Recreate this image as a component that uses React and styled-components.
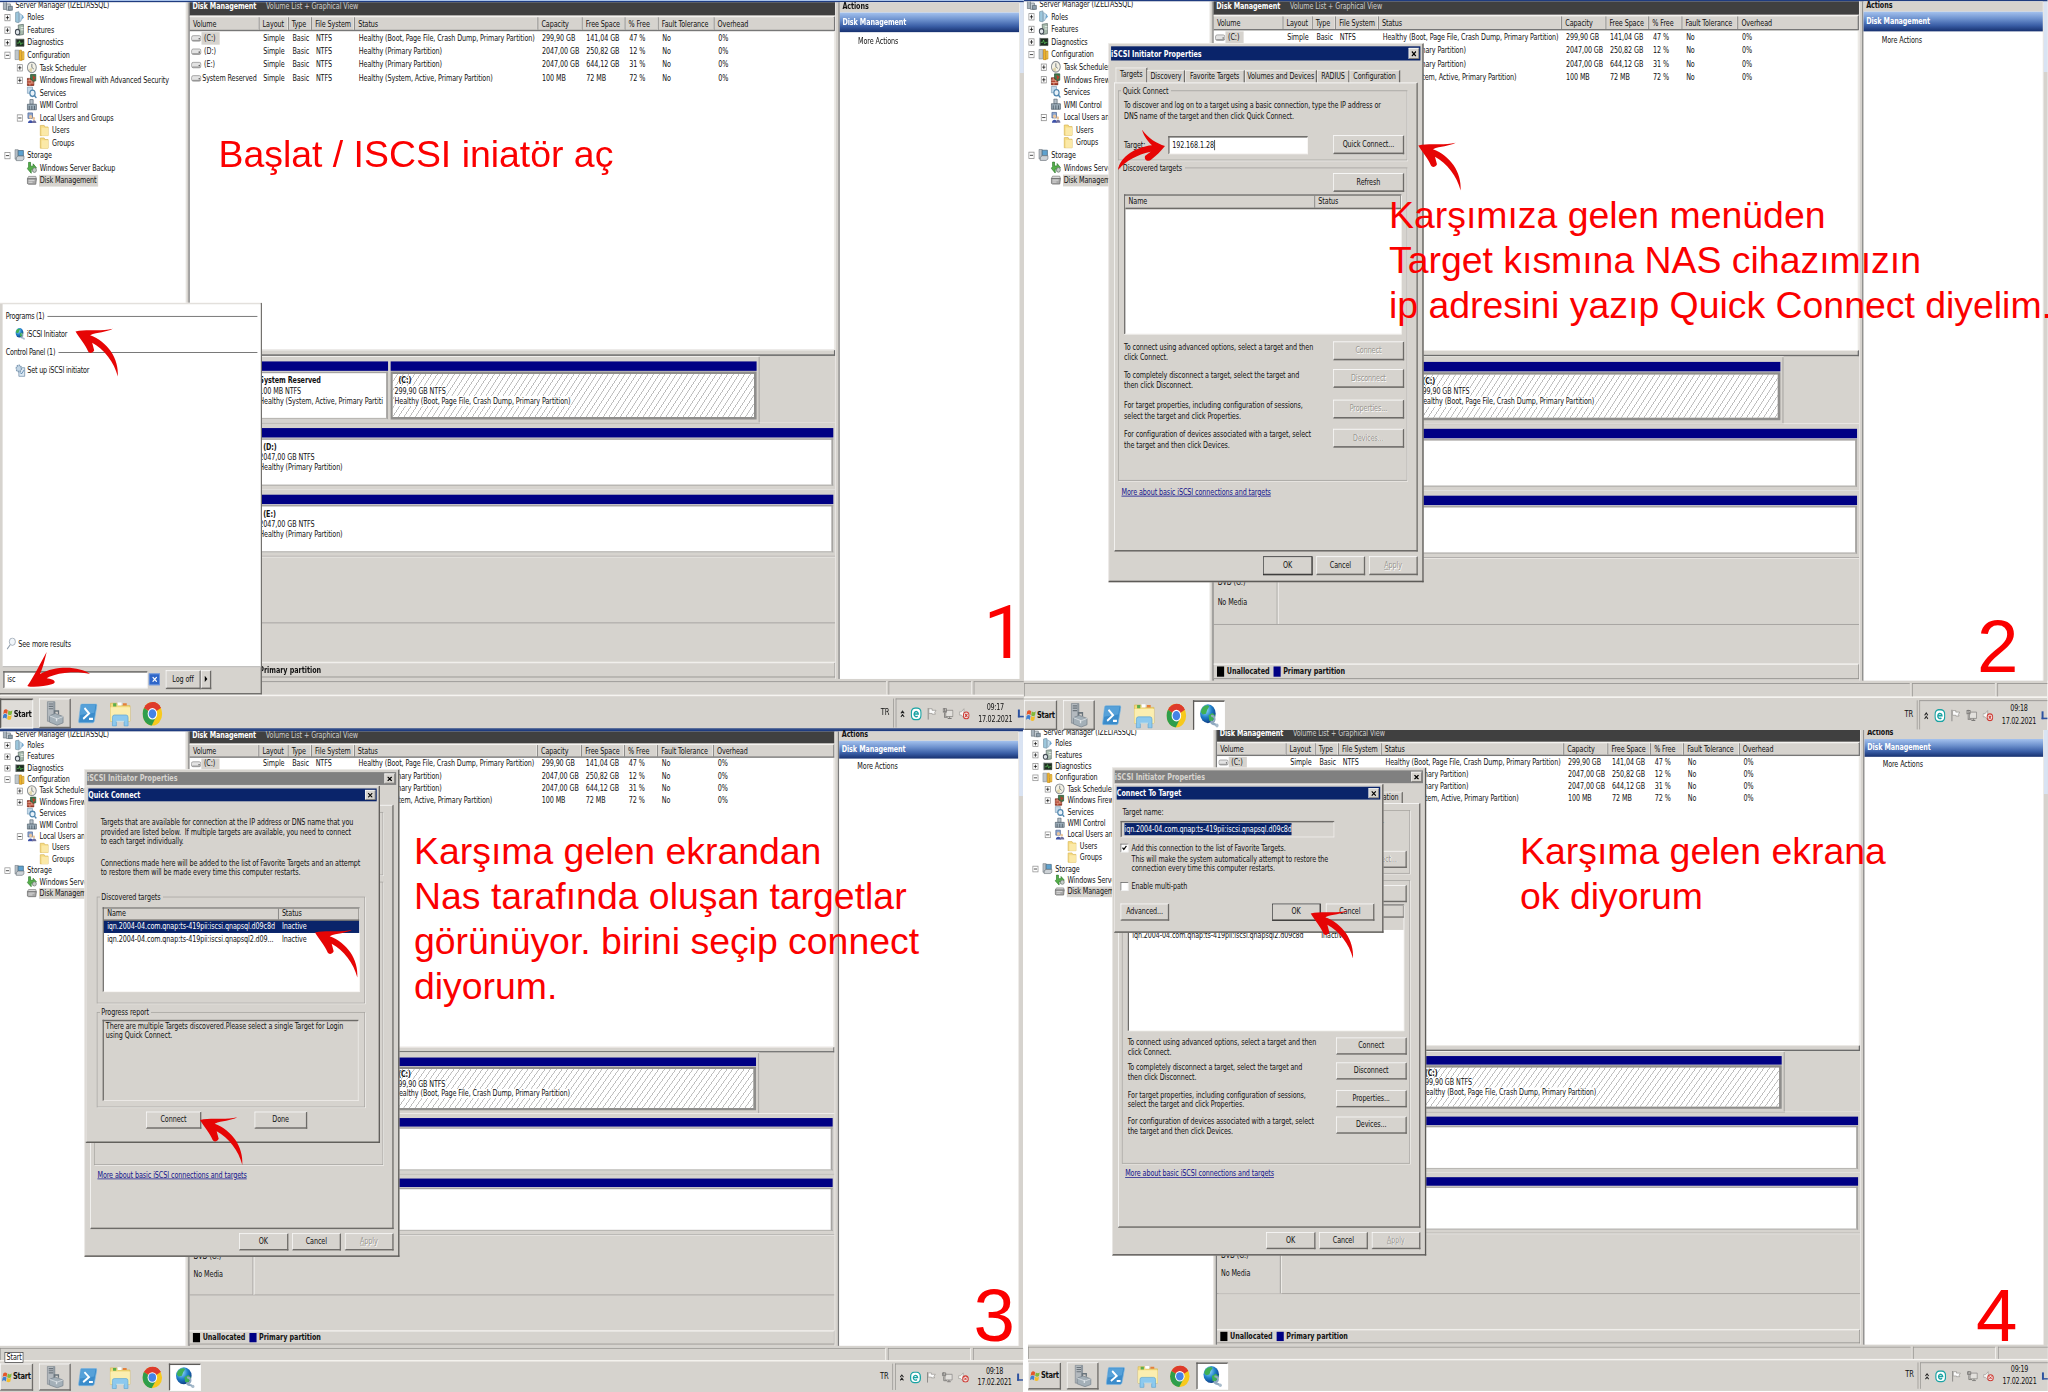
import React from "react";
import styled, { createGlobalStyle, css } from "styled-components";

const FACE = "#d6d3ce";
const NAVY = "#0a246a";
const DISK_BLUE = "#000084";

const GlobalStyle = createGlobalStyle`
  html, body { margin: 0; padding: 0; background: #fff; }
  body { width: 2048px; height: 1392px; overflow: hidden; }
  * { box-sizing: border-box; }
`;

/* ---------- page ---------- */

const Sheet = styled.main`
  position: relative;
  display: grid;
  grid-template-columns: 1024px 1024px;
  grid-template-rows: 730px 662px;
  width: 2048px;
  height: 1392px;
  overflow: hidden;
  background: #fff;
`;

const Shot = styled.section`
  overflow: hidden;
  background: #fff;
  padding-left: ${(p) => p.$inset || 0}px;
`;

const Desktop = styled.div`
  position: relative;
  display: flex;
  flex-direction: column;
  width: 1575px;
  height: 931px;
  background: ${FACE};
  transform-origin: 0 0;
  transform: translateY(${(p) => p.$dy || 0}px) scale(${(p) => p.$sx}, ${(p) => p.$sy});
  font-family: "DejaVu Sans Condensed", "DejaVu Sans", "Noto Sans", sans-serif;
  font-size: 11px;
  letter-spacing: -0.14px;
  line-height: 13px;
  color: #111;
  white-space: nowrap;
`;

const TopStrip = styled.div`
  flex: none;
  height: 3px;
  background: linear-gradient(#a9c3ea 0 30%, #1f3c80 50%);
`;

const Body = styled.div`
  flex: none;
  display: flex;
  height: 863px;
`;

/* ---------- tree ---------- */

const TreePane = styled.nav`
  width: 286px;
  overflow: hidden;
  background: #fff;
`;

const TreeList = styled.div`
  margin-top: -5px;
`;

const TreeRow = styled.div`
  display: flex;
  align-items: center;
  height: 16px;
  padding-left: ${(p) => p.$pad}px;
`;

const Expander = styled.span`
  flex: none;
  display: grid;
  place-items: center;
  width: 9px;
  height: 9px;
  margin-right: 6px;
  border: 1px solid ${(p) => (p.$on ? "#8a8a8a" : "transparent")};
  svg { display: block; }
`;

const TreeIcon = styled.svg`
  flex: none;
  width: 16px;
  height: 16px;
`;

const TreeText = styled.span`
  margin-left: 3px;
  padding: 1px 2px 1px 1px;
  background: ${(p) => (p.$sel ? FACE : "transparent")};
`;

const PaneGap = styled.div`
  width: ${(p) => p.$w}px;
  background: ${FACE};
  border-left: 1px solid #f1efec;
  border-right: 2px solid #7c7c7c;
`;

/* ---------- centre ---------- */

const Centre = styled.div`
  display: flex;
  flex-direction: column;
  width: 993px;
`;

const DarkTitle = styled.div`
  flex: none;
  display: flex;
  align-items: flex-start;
  gap: 15px;
  height: 17px;
  padding: 0 0 0 4px;
  line-height: 12px;
  background: #404040;
  color: #cfcfcf;
  b { color: #fff; }
`;

const TableHead = styled.div`
  flex: none;
  display: flex;
  height: 20px;
  border-top: 2px solid #f4f2ef;
  border-bottom: 2px solid #777;
  border-right: 2px solid #777;
  background: ${FACE};
`;

const HeadCell = styled.div`
  flex: none;
  width: ${(p) => p.$w}px;
  padding: 2px 0 0 5px;
  border-right: ${(p) => (p.$last ? 0 : 1)}px solid #666;
  box-shadow: ${(p) => (p.$last ? "none" : "inset -1px 0 0 #f6f4f1")};
`;

const VolumeArea = styled.div`
  flex: none;
  height: 406px;
  background: #fff;
  border-right: 2px solid #eceae6;
`;

const VolRow = styled.div`
  display: flex;
  align-items: center;
  height: 17px;
`;

const VolCell = styled.div`
  flex: none;
  display: flex;
  align-items: center;
  width: ${(p) => p.$w}px;
  padding-left: ${(p) => (p.$first ? 2 : 6)}px;
`;

const VolName = styled.span`
  padding: 1px 7px 2px 4px;
  margin-right: -8px;
  ${(p) => p.$tight && css`padding-left: 1px;`}
  background: ${(p) => (p.$sel ? FACE : "transparent")};
`;

const Splitter = styled.div`
  flex: none;
  height: 8px;
  background: ${FACE};
  border-top: 1px solid #f4f2ef;
  border-bottom: 2px solid #6b6b6b;
  border-right: 2px solid #6b6b6b;
`;

const Graph = styled.div`
  flex: none;
  height: 390px;
  padding-top: 1px;
  background: ${FACE};
`;

const DiskRow = styled.div`
  display: flex;
  height: 85px;
  padding: 6px 0 4px 101px;
  width: ${(p) => p.$w}px;
  gap: 4px;
  border-bottom: 1px solid #9b9996;
  box-shadow: 0 -1px 0 #f1efec;
  ${(p) => p.$edge && css`border-right: 2px solid #b0aeaa;`}
`;

const Partition = styled.div`
  display: flex;
  flex-direction: column;
  width: ${(p) => p.$w}px;
`;

const PartBar = styled.div`
  flex: none;
  height: 12px;
  background: ${DISK_BLUE};
`;

const PartBox = styled.div`
  height: 62px;
  margin-top: 1px;
  padding: 3px 4px;
  border: 2px solid #a6a4a1;
  border-right-width: 3px;
  border-bottom-color: #b9b7b3;
  background: #fff;
  overflow: hidden;
  ${(p) =>
    p.$hatch &&
    css`
      border-width: 3px 4px 3px 3px;
      border-color: #8f8e8c;
      padding: 2px 3px;
      background: repeating-linear-gradient(128deg, #fff 0 5.4px, #bdbdbd 5.7px 6.6px, #fff 6.9px);
    `}
  b { display: block; padding-left: ${(p) => p.$ind}px; }
  div { width: fit-content; background: #fff; }
`;

const OpticalRow = styled.div`
  display: flex;
  height: 85px;
  border-top: 1px solid #f1efec;
  border-bottom: 1px solid #9b9996;
`;

const OpticalLabel = styled.div`
  width: 98px;
  padding: 23px 0 0 6px;
  border-right: 1px solid #8d8b88;
  box-shadow: 2px 0 0 #f1efec;
  div { height: 13px; }
`;

const Legend = styled.div`
  flex: none;
  display: flex;
  align-items: center;
  gap: 4px;
  height: 20px;
  padding-left: 5px;
  border-top: 2px solid #f1efec;
  border-bottom: 1px solid #8d8b88;
  border-right: 1px solid #8d8b88;
  background: ${FACE};
  b { margin-right: 2px; letter-spacing: -0.05px; }
`;

const Swatch = styled.span`
  width: 11px;
  height: 13px;
  background: ${(p) => p.$c};
`;

/* ---------- right ---------- */

const Actions = styled.aside`
  width: 276px;
  background: #fff;
`;

const ActionsHead = styled.div`
  height: 13px;
  padding-left: 4px;
  line-height: 10px;
  font-weight: bold;
  background: ${FACE};
`;

const ActionsTitle = styled.div`
  height: 25px;
  padding-left: 4px;
  line-height: 25px;
  font-weight: bold;
  color: #fff;
  background: linear-gradient(#a4c2ee, #6f93cf 35%, #3a5ea6 70%, #16306f);
`;

const ActionItem = styled.div`
  padding: 5px 0 0 28px;
`;

const Scroll = styled.div`
  width: 7px;
  background: linear-gradient(#d9e3f3 0 90px, ${FACE} 90px);
  border-left: 1px solid #f3f1ee;
`;

/* ---------- status bar and taskbar ---------- */

const StatusBar = styled.div`
  flex: none;
  display: flex;
  gap: 4px;
  height: 22px;
  padding-top: 3px;
  border-bottom: 2px solid #f6f4f1;
`;

const StatusCell = styled.div`
  width: ${(p) => p.$w}px;
  border-top: 1px solid #908e8b;
  border-left: 1px solid #908e8b;
  box-shadow: 1px 0 0 #f1efec;
`;

const Taskbar = styled.div`
  flex: none;
  display: flex;
  align-items: flex-start;
  height: 43px;
  padding-top: 3px;
  border-bottom: ${(p) => (p.$line ? "2px solid #1f3c80" : "0")};
`;

const raised = css`
  border: 1px solid #fff;
  border-right: 2px solid #6d6b68;
  border-bottom: 2px solid #6d6b68;
`;

const StartButton = styled.div`
  display: flex;
  align-items: center;
  width: 51px;
  height: 38px;
  padding-left: 2px;
  gap: 1px;
  font-weight: bold;
  font-size: 11.5px;
  letter-spacing: -0.4px;
  ${raised}
  ${(p) =>
    p.$down &&
    css`
      border: 2px solid #5d5b58;
      border-right: 1px solid #fff;
      border-bottom: 1px solid #fff;
      background: #dfdcd8;
    `}
`;

const TaskItem = styled.div`
  display: grid;
  place-items: center;
  width: 49px;
  height: 38px;
  margin-left: ${(p) => p.$ml}px;
  border: 1px solid transparent;
  ${(p) => p.$kind === "window" && raised}
  ${(p) =>
    p.$kind === "active" &&
    css`
      background: #fff;
      border: 2px solid #5d5b58;
      border-right: 1px solid #fff;
      border-bottom: 1px solid #fff;
    `}
`;

const Lang = styled.div`
  margin-left: auto;
  width: 20px;
  height: 37px;
  line-height: 34px;
  font-size: 11.5px;
  border-right: 1px solid #8f8d8a;
`;

const Tray = styled.div`
  display: flex;
  align-items: center;
  width: 197px;
  height: 37px;
  margin-left: 3px;
  padding-left: 5px;
  gap: 8px;
  border-top: 1px solid #8f8d8a;
  border-left: 1px solid #8f8d8a;
  svg { flex: none; display: block; }
`;

const Clock = styled.div`
  display: flex;
  flex-direction: column;
  align-items: center;
  width: 66px;
  line-height: 16px;
  letter-spacing: -0.4px;
`;

const Peek = styled.span`
  align-self: center;
  width: 9px;
  height: 10px;
  margin-left: -4px;
  border-left: 3px solid #2d52a0;
  border-bottom: 2px solid #2d52a0;
`;

const Tooltip = styled.div`
  position: absolute;
  left: 7px;
  top: 875px;
  width: 19px;
  min-width: max-content;
  height: 15px;
  padding: 0 2px;
  border: 1px solid #333;
  background: #fff;
  text-align: center;
  line-height: 13px;
`;

/* ---------- start menu ---------- */

const StartMenu = styled.div`
  position: absolute;
  left: 0;
  top: 386px;
  display: flex;
  flex-direction: column;
  width: 403px;
  height: 500px;
  background: ${FACE};
  border-top: 1px solid #f4f2ef;
  border-right: 2px solid #6d6b68;
  border-bottom: 2px solid #6d6b68;
`;

const MenuResults = styled.div`
  display: flex;
  flex-direction: column;
  height: 463px;
  margin: 1px 0 0 4px;
  padding: 8px 5px 0 5px;
  background: #fff;
  border-bottom: 1px solid #9b9996;
`;

const MenuHeading = styled.div`
  display: flex;
  align-items: center;
  gap: 5px;
  height: 14px;
  letter-spacing: -0.4px;
  margin-bottom: ${(p) => p.$gap}px;
  &::after { content: ""; flex: 1; height: 1px; background: #555; }
`;

const MenuEntry = styled.div`
  display: flex;
  align-items: center;
  gap: 2px;
  height: 16px;
  padding-left: 14px;
  letter-spacing: -0.3px;
  margin-bottom: ${(p) => p.$gap}px;
`;

const MoreResults = styled.div`
  display: flex;
  align-items: center;
  gap: 3px;
  margin: auto 0 21px 1px;
`;

const SearchRow = styled.div`
  display: flex;
  align-items: center;
  height: 31px;
  padding-left: 5px;
`;

const sunken = css`
  border: 2px solid #6d6b68;
  border-right: 1px solid #f4f2ef;
  border-bottom: 1px solid #f4f2ef;
`;

const SearchBox = styled.div`
  width: 222px;
  height: 22px;
  padding: 2px 0 0 4px;
  background: #fff;
  ${sunken}
`;

const ClearButton = styled.div`
  display: grid;
  place-items: center;
  width: 17px;
  height: 15px;
  margin: 0 9px 0 2px;
  background: #2f66c8;
  border: 1px solid #86aae6;
`;

const LogOff = styled.div`
  display: grid;
  place-items: center;
  width: ${(p) => p.$w}px;
  height: 24px;
  ${raised}
`;

/* ---------- dialogs ---------- */

const Window = styled.div`
  position: absolute;
  left: ${(p) => p.$x}px;
  top: ${(p) => p.$y}px;
  display: flex;
  flex-direction: column;
  width: ${(p) => p.$w}px;
  height: ${(p) => p.$h}px;
  padding: 3px;
  background: ${FACE};
  border: 1px solid #efedea;
  border-right: 2px solid #5d5b58;
  border-bottom: 2px solid #5d5b58;
`;

const Caption = styled.div`
  flex: none;
  display: flex;
  justify-content: space-between;
  align-items: center;
  height: 18px;
  padding: 0 2px 0 0;
  font-weight: bold;
  letter-spacing: 0;
  color: ${(p) => (p.$off ? "#d8d5d0" : "#fff")};
  background: ${(p) => (p.$off ? "#808080" : NAVY)};
`;

const CloseBox = styled.span`
  display: grid;
  place-items: center;
  width: 16px;
  height: 14px;
  background: ${FACE};
  ${raised}
  border-width: 1px;
`;

const Tabs = styled.div`
  flex: none;
  display: flex;
  align-items: flex-end;
  height: 19px;
  margin: 9px 0 0 7px;
`;

const Tab = styled.div`
  display: grid;
  place-items: center;
  width: ${(p) => p.$w}px;
  height: ${(p) => (p.$on ? 19 : 16)}px;
  padding-bottom: ${(p) => (p.$on ? 3 : 0)}px;
  border-top: 1px solid #f6f4f1;
  border-left: 1px solid #f6f4f1;
  border-right: 2px solid #6d6b68;
`;

const Page = styled.div`
  flex: none;
  display: flex;
  flex-direction: column;
  height: 596px;
  margin: 0 4px 0 5px;
  padding: 3px 14px 0 5px;
  ${raised}
`;

const Group = styled.fieldset`
  flex: none;
  display: flex;
  flex-direction: column;
  height: ${(p) => p.$h}px;
  min-width: 0;
  margin: 0 0 ${(p) => p.$mb || 0}px;
  padding: 0 4px 0 8px;
  border: 1px solid #a3a19d;
  box-shadow: 1px 1px 0 #f4f2ef;
  legend { padding: 0 4px 0 2px; margin-left: -4px; height: 13px; }
`;

const Copy = styled.div`
  flex: none;
  height: ${(p) => p.$h}px;
  padding-top: ${(p) => p.$pt || 0}px;
  line-height: 13px;
`;

const Line = styled.div`
  flex: none;
  display: flex;
  align-items: ${(p) => p.$align || "center"};
  justify-content: ${(p) => p.$justify || "flex-start"};
  gap: ${(p) => p.$gap || 0}px;
  height: ${(p) => p.$h}px;
`;

const Button = styled.div`
  flex: none;
  display: grid;
  place-items: center;
  width: ${(p) => p.$w}px;
  height: 24px;
  color: ${(p) => (p.$off ? "#98958f" : "#111")};
  text-shadow: ${(p) => (p.$off ? "1px 1px 0 #fff" : "none")};
  background: ${FACE};
  ${raised}
  outline: ${(p) => (p.$default ? "1px solid #222" : "none")};
  outline-offset: -1px;
`;

const FieldLabel = styled.span`
  flex: none;
  width: 68px;
`;

const TextField = styled.div`
  flex: none;
  width: ${(p) => p.$w}px;
  height: 23px;
  padding: 3px 0 0 4px;
  background: ${(p) => (p.$ro ? FACE : "#fff")};
  ${sunken}
  mark { padding: 2px 0; color: #fff; background: ${NAVY}; }
  span { padding-right: 1px; border-right: 1px solid #000; }
`;

const ListBox = styled.div`
  flex: none;
  height: ${(p) => p.$h}px;
  margin-right: ${(p) => p.$mr || 0}px;
  background: #fff;
  ${sunken}
`;

const ListHead = styled.div`
  display: flex;
  height: 17px;
  background: ${FACE};
  border-bottom: 2px solid #6d6b68;
  border-right: 1px solid #6d6b68;
`;

const ListCell = styled.div`
  flex: none;
  width: ${(p) => p.$w}px;
  padding-left: 5px;
  ${(p) => p.$line && css`border-right: 1px solid #666;`}
`;

const ListRow = styled.div`
  display: flex;
  align-items: center;
  height: 17px;
  color: ${(p) => (p.$sel ? "#fff" : "#111")};
  background: ${(p) => (p.$sel ? NAVY : p.$dim ? FACE : "transparent")};
`;

const Link = styled.a`
  display: block;
  margin: 8px 0 0 5px;
  color: #12128c;
  text-decoration: underline;
`;

const Report = styled.div`
  flex: none;
  height: 114px;
  margin: 4px 5px 0 0;
  padding: 1px 0 0 3px;
  ${sunken}
`;

const CheckBox = styled.span`
  display: grid;
  place-items: center;
  width: 12px;
  height: 12px;
  background: #fff;
  border: 1px solid #555;
  border-right-color: #eee;
  border-bottom-color: #eee;
`;

const PushRight = styled.span`
  margin-left: auto;
`;

const ActionSpacer = styled.div`
  flex: none;
  height: 9px;
`;

const DialogFooter = styled.div`
  flex: none;
  display: flex;
  justify-content: flex-end;
  gap: 6px;
  padding: 6px 4px 0 0;
  u { text-decoration: underline; }
  ${Button} { display: flex; align-items: center; justify-content: center; }
`;

const QuickBody = styled.div`
  padding: 24px 18px 0 19px;
`;

const QuickGroups = styled.div`
  margin: 0 0 0 -6px;
`;

const GroupInner = styled.div`
  padding-top: 8px;
`;

const QuickButtons = styled.div`
  display: flex;
  gap: 82px;
  padding: 6px 0 0 70px;
`;

const ConnectBody = styled.div`
  padding: 12px 9px 0 6px;
`;

const CheckLines = styled.div`
  padding-top: 7px;
`;

const Indented = styled.div`
  height: 39px;
  padding: 1px 0 0 17px;
`;

const ConnectButtons = styled.div`
  display: flex;
  gap: 8px;
  padding-top: 17px;
`;

/* ---------- annotations ---------- */

const Note = styled.p`
  position: absolute;
  left: ${(p) => p.$x}px;
  top: ${(p) => p.$y}px;
  margin: 0;
  font-family: ${(p) => (p.$plain ? "Roboto, " : "")}"Liberation Sans", Arial, sans-serif;
  font-size: ${(p) => p.$size || 37.4}px;
  line-height: 45px;
  white-space: pre;
  color: #fb0000;
`;

const ArrowLayer = styled.svg`
  position: absolute;
  left: 0;
  top: 0;
  width: 2048px;
  height: 1392px;
  pointer-events: none;
`;

/* ---------- small drawings ---------- */

const treeArt = {
  server: (
    <g>
      <path d="M1 3h5v11H1z" fill="#a9b4bd" stroke="#6b7780" />
      <path d="M6 7h6v8H6z" fill="#c8d0d6" stroke="#6b7780" />
      <path d="M9 10h6v5H9z" fill="#8fa0ad" stroke="#56636d" />
    </g>
  ),
  roles: (
    <g>
      <path d="M2 2l5-1v14l-5-1z" fill="#9cc7dd" stroke="#7795a6" />
      <path d="M8 3l5 3-3 7-2 1z" fill="#c3dcec" stroke="#7ea3bd" />
      <path d="M12 5l3 3-3 3z" fill="#6da5cf" />
    </g>
  ),
  features: (
    <g>
      <path d="M6 2l8-1v13l-7 1z" fill="#a8bcae" stroke="#5b6b66" />
      <path d="M10 5h4M10 8h4" stroke="#fff" />
      <circle cx="5" cy="11" r="3.4" fill="#dfe5ea" stroke="#454d55" strokeWidth="1.6" />
    </g>
  ),
  diagnostics: (
    <g>
      <path d="M1 3h3v11H1z" fill="#b9c0c5" />
      <path d="M3 4h12v9H3z" fill="#1d2b20" stroke="#47524a" />
      <path d="M4 9h3l1-3 2 5 1-2h3" stroke="#57c457" fill="none" />
    </g>
  ),
  config: (
    <g>
      <path d="M1 2h6v12H1z" fill="#bfc6ca" stroke="#8b949a" />
      <path d="M8 2h3v6l1 7H8z" fill="#f0b52c" stroke="#c28714" />
      <path d="M12 4h3v10h-3z" fill="#f6cf55" stroke="#c28714" />
    </g>
  ),
  clock: (
    <g>
      <circle cx="8" cy="8" r="6.8" fill="#f4f1e4" stroke="#8a8f94" strokeWidth="1.5" />
      <path d="M8 3.5V8l3 2" stroke="#4a5662" fill="none" />
      <path d="M3 11a6 6 0 0 0 5 3V8z" fill="#d7c98e" opacity=".7" />
    </g>
  ),
  firewall: (
    <g>
      <path d="M1 6h10v9H1z" fill="#b5432e" stroke="#6e2417" />
      <path d="M1 9h10M1 12h10M4 6v3M8 9v3M5 12v3" stroke="#e6b7a4" />
      <path d="M6 1h8v8a6 6 0 0 1-8-3z" fill="#3f7c4c" stroke="#2a4f34" />
      <path d="M9 2l5 3-4 4z" fill="#b8402d" />
    </g>
  ),
  services: (
    <g>
      <path d="M1 1h8v8H1z" fill="#c3d9ea" stroke="#7e9db5" />
      <circle cx="9" cy="9" r="4" fill="#e9f2f9" stroke="#4f86ae" strokeWidth="1.8" />
      <path d="M12 12l3 3" stroke="#4f86ae" strokeWidth="2" />
    </g>
  ),
  wmi: (
    <g>
      <path d="M5 1h5v6H5z" fill="#b8c3cb" stroke="#5d6b76" />
      <path d="M1 7h14v7H1z" fill="#9fb0bc" stroke="#4d5c67" />
      <path d="M4 9v5M8 9v5M12 9v5" stroke="#3b4852" />
    </g>
  ),
  users: (
    <g>
      <path d="M2 2h7v7H2z" fill="#8ea7cf" stroke="#4c6394" />
      <circle cx="6" cy="7" r="2.4" fill="#ecc69b" />
      <path d="M2 15c0-5 8-5 8 0z" fill="#3d51a8" />
      <circle cx="11" cy="9" r="2" fill="#ecc69b" />
      <path d="M8 15c0-5 7-5 7 0z" fill="#6f6f9c" />
    </g>
  ),
  folder: (
    <g>
      <path d="M2 2h6l1 2h5v11H2z" fill="#f7dc83" stroke="#d7b556" />
      <path d="M4 5h10v10H4z" fill="#fbe9a8" />
    </g>
  ),
  storage: (
    <g>
      <path d="M1 1h5v12H1z" fill="#b7bec4" stroke="#7c858c" />
      <path d="M6 2h8v7H6z" fill="#5ea2cf" stroke="#42647c" />
      <path d="M3 11l3-2h9v4l-3 2H3z" fill="#cdd2d6" stroke="#6f777e" />
    </g>
  ),
  backup: (
    <g>
      <path d="M3 1h3v5h4V3l5 5-5 5v-3H7v5L1 9l2-2z" fill="#55b04a" stroke="#2e7a2b" />
      <circle cx="12" cy="11" r="3" fill="#c6cdc9" stroke="#68736d" />
    </g>
  ),
  disk: (
    <g>
      <path d="M3 3h11l1 3H1z" fill="#d9d9d9" stroke="#7d7d7d" />
      <path d="M1 6h14l-1 7H3l-2-1z" fill="#a9a9a9" stroke="#636363" />
      <path d="M3 8h9M3 10.500h6" stroke="#eee" />
    </g>
  ),
};

const Globe = ({ size }) => (
  <svg width={size} height={size} viewBox="0 0 32 32">
    <defs>
      <radialGradient id="sea" cx=".35" cy=".3" r=".8">
        <stop offset="0" stopColor="#9fe3ff" />
        <stop offset=".5" stopColor="#1f7fc9" />
        <stop offset="1" stopColor="#0b2f75" />
      </radialGradient>
    </defs>
    <circle cx="14" cy="13" r="12" fill="url(#sea)" />
    <path d="M5 6c5-5 10-4 11-2l-3 4-2 5-5 1-3-3zM15 15l6-3 4 3-4 8-5-1z" fill="#3fb054" />
    <path d="M19 16a4 4 0 1 1-1 7l2 2c2 2 5 0 7 3" fill="none" stroke="#8fa9c0" strokeWidth="3" />
    <circle cx="28" cy="28" r="2.4" fill="#a9bccb" />
  </svg>
);

const WinFlag = () => (
  <svg width="16" height="20" viewBox="0 0 16 20">
    <path d="M2 5c2-2 4-2 6 0L7 10C5 8 3 8 1 10z" fill="#e4572a" />
    <path d="M9 5c2 1.500 4 1.500 6 0l-1 5c-2 1.500-4 1.500-6 0z" fill="#82b93a" />
    <path d="M1 11c2-2 4-2 6 0l-1 5c-2-2-4-2-6 0z" fill="#3f7fd0" />
    <path d="M8 11c2 1.500 4 1.500 6 0l-1 5c-2 1.500-4 1.500-6 0z" fill="#f4bd2b" />
  </svg>
);

const ServerManager = () => (
  <svg width="34" height="32" viewBox="0 0 34 32">
    <path d="M6 1h11v25H6z" fill="#b3b9be" stroke="#7f888f" />
    <path d="M8 4h7M8 7h7M8 10h7" stroke="#6c757c" strokeWidth="1.5" />
    <path d="M15 1h3v18h-3z" fill="#8d969d" />
    <path d="M9 19l9-3 12 4v8l-9 3-12-4z" fill="#a4b0b8" stroke="#74808a" />
    <path d="M9 19l12 4 9-3" fill="none" stroke="#e4e9ec" />
    <path d="M17 16v-3h6v4" fill="none" stroke="#6a757d" strokeWidth="2" />
    <path d="M20 22v4" stroke="#dfe5e9" strokeWidth="2" />
  </svg>
);

const PowerShell = () => (
  <svg width="30" height="26" viewBox="0 0 30 26">
    <path d="M6 1h22q1 0 1 2l-4 20q-1 2-3 2H2q-1 0-1-2L4 3q0-2 2-2z" fill="#3b8ccb" stroke="#7db7e2" />
    <path d="M5 2h22l-2 10L3 15z" fill="#62a9de" opacity=".7" />
    <path d="M10 6l7 7-9 7M17 20h6" fill="none" stroke="#fff" strokeWidth="2.800" />
  </svg>
);

const Explorer = () => (
  <svg width="34" height="34" viewBox="0 0 34 34">
    <path d="M2 4h10l2 3h18v20H2z" fill="#f3da7d" stroke="#d9bb55" />
    <path d="M6 4h5v4H6z" fill="#5cae4e" />
    <path d="M13 3h6v4h-6z" fill="#fff" />
    <path d="M21 4h6v3h-6z" fill="#e5813a" />
    <path d="M2 9h30v18H2z" fill="#fbeeb0" />
    <path d="M5 33V22q0-3 3-3h18q3 0 3 3v11h-6v-6H11v6z" fill="#8cc9ee" stroke="#5fa6d3" />
    <path d="M11 27h12" stroke="#fff" />
  </svg>
);

const Chrome = () => (
  <svg width="31" height="31" viewBox="0 0 32 32">
    <circle cx="16" cy="16" r="15.500" fill="#f7c91d" />
    <path d="M16 16L2.600 8.200A15.500 15.500 0 0 1 29.400 8.200z" fill="#de3b2c" />
    <path d="M16 .5a15.500 15.500 0 0 1 13.400 7.700H16z" fill="#de3b2c" />
    <path d="M2.600 8.200A15.500 15.500 0 0 0 15 31.500l7-12-6-3.500z" fill="#2e9e4b" />
    <circle cx="16" cy="16" r="7.600" fill="#fff" />
    <circle cx="16" cy="16" r="6" fill="#4583e6" />
  </svg>
);

const DriveIcon = () => (
  <svg width="16" height="10" viewBox="0 0 16 10">
    <rect x=".7" y="1.500" width="14.500" height="7" rx="2.500" fill="#e3e3e3" stroke="#8b8b8b" />
    <path d="M2 7.500h12" stroke="#777" />
    <circle cx="12.500" cy="5.500" r="1" fill="#444" />
  </svg>
);

const Cross = ({ c = "#000" }) => (
  <svg width="8" height="7" viewBox="0 0 8 7">
    <path d="M.8.500l6.400 6M7.200.500l-6.400 6" stroke={c} strokeWidth="1.700" />
  </svg>
);

const TrayIcons = () => (
  <>
    <svg width="9" height="11" viewBox="0 0 9 11">
      <path d="M2 5l2.500-3L7 5M2 9.500l2.500-3L7 9.500" fill="none" stroke="#222" strokeWidth="1.500" />
    </svg>
    <svg width="17" height="17" viewBox="0 0 17 17">
      <rect x="1" y="1" width="15" height="15" rx="6" fill="#fff" stroke="#1aa3a3" strokeWidth="2" />
      <path d="M5.500 8.700h6.300a3.300 3.300 0 1 0-1 2.600" fill="none" stroke="#1aa3a3" strokeWidth="1.900" />
    </svg>
    <svg width="16" height="16" viewBox="0 0 16 16">
      <path d="M2 1v15" stroke="#8b8987" strokeWidth="1.500" />
      <path d="M3 2h5v2h6l-2 3 1 2H8V8H3z" fill="#fbfbfb" stroke="#96938f" />
    </svg>
    <svg width="17" height="16" viewBox="0 0 17 16">
      <path d="M5 4h11v8H5z" fill="#e2e0dc" stroke="#7d7b79" />
      <path d="M8 14.500h6M11 12v3M3 1v5M1 2h5v4H1zM3 7v6h5" stroke="#7d7b79" fill="none" strokeWidth="1.300" />
    </svg>
    <svg width="17" height="16" viewBox="0 0 17 16">
      <path d="M1 6h3l4-4v12l-4-4H1z" fill="#f6f6f4" stroke="#a19e9a" />
      <circle cx="11.500" cy="10.500" r="4.300" fill="#f1e3e1" stroke="#cf3a33" strokeWidth="1.500" />
      <path d="M9.700 8.700l3.600 3.600M13.300 8.700l-3.600 3.600" stroke="#cf3a33" strokeWidth="1.400" />
    </svg>
  </>
);

/* ---------- data ---------- */

const TREE = [
  ["server", "Server Manager (IZELTASSQL)", 4, null],
  ["roles", "Roles", 7, "+"],
  ["features", "Features", 7, "+"],
  ["diagnostics", "Diagnostics", 7, "+"],
  ["config", "Configuration", 7, "-"],
  ["clock", "Task Scheduler", 26, "+"],
  ["firewall", "Windows Firewall with Advanced Security", 26, "+"],
  ["services", "Services", 26, ""],
  ["wmi", "WMI Control", 26, ""],
  ["users", "Local Users and Groups", 26, "-"],
  ["folder", "Users", 45, ""],
  ["folder", "Groups", 45, ""],
  ["storage", "Storage", 7, "-"],
  ["backup", "Windows Server Backup", 26, ""],
  ["disk", "Disk Management", 26, "", true],
];

const COLUMNS = [
  ["Volume", 107],
  ["Layout", 45],
  ["Type", 36],
  ["File System", 66],
  ["Status", 282],
  ["Capacity", 68],
  ["Free Space", 66],
  ["% Free", 51],
  ["Fault Tolerance", 86],
  ["Overhead", 180],
];

const VOLUMES = [
  ["(C:)", "Simple", "Basic", "NTFS", "Healthy (Boot, Page File, Crash Dump, Primary Partition)", "299,90 GB", "141,04 GB", "47 %", "No", "0%"],
  ["(D:)", "Simple", "Basic", "NTFS", "Healthy (Primary Partition)", "2047,00 GB", "250,82 GB", "12 %", "No", "0%"],
  ["(E:)", "Simple", "Basic", "NTFS", "Healthy (Primary Partition)", "2047,00 GB", "644,12 GB", "31 %", "No", "0%"],
  ["System Reserved", "Simple", "Basic", "NTFS", "Healthy (System, Active, Primary Partition)", "100 MB", "72 MB", "72 %", "No", "0%"],
];

const TARGET_ACTIONS = [
  ["To connect using advanced options, select a target and then", "click Connect.", "Connect", 35],
  ["To completely disconnect a target, select the target and", "then click Disconnect.", "Disconnect", 39],
  ["For target properties, including configuration of sessions,", "select the target and click Properties.", "Properties...", 37],
  ["For configuration of devices associated with a target, select", "the target and then click Devices.", "Devices...", 24],
];

/* ---------- composed parts ---------- */

function Tree() {
  return (
    <TreePane>
      <TreeList>
        {TREE.map(([icon, label, pad, sign, sel]) => (
          <TreeRow key={label} $pad={pad}>
            {sign !== null && (
              <Expander $on={Boolean(sign)}>
                {sign && (
                  <svg width="7" height="7" viewBox="0 0 7 7">
                    <path d={sign === "+" ? "M1 3.500h5M3.500 1v5" : "M1 3.500h5"} stroke="#000" />
                  </svg>
                )}
              </Expander>
            )}
            <TreeIcon viewBox="0 0 16 16">{treeArt[icon]}</TreeIcon>
            <TreeText $sel={sel}>{label}</TreeText>
          </TreeRow>
        ))}
      </TreeList>
    </TreePane>
  );
}

function DiskManagement() {
  return (
    <Centre>
      <DarkTitle>
        <b>Disk Management</b>
        <span>Volume List + Graphical View</span>
      </DarkTitle>
      <TableHead>
        {COLUMNS.map(([name, w], i) => (
          <HeadCell key={name} $w={w} $last={i === COLUMNS.length - 1}>{name}</HeadCell>
        ))}
      </TableHead>
      <VolumeArea>
        {VOLUMES.map((row, r) => (
          <VolRow key={row[0]}>
            {row.map((v, i) => (
              <VolCell key={i} $w={COLUMNS[i][1]} $first={i === 0}>
                {i === 0 ? (
                  <>
                    <DriveIcon />
                    <VolName $sel={r === 0} $tight={r === 3}>{v}</VolName>
                  </>
                ) : (
                  v
                )}
              </VolCell>
            ))}
          </VolRow>
        ))}
      </VolumeArea>
      <Splitter />
      <Graph>
        <DiskRow $w={877} $edge>
          <Partition $w={204}>
            <PartBar />
            <PartBox $ind={0}>
              <b>System Reserved</b>
              <div>100 MB NTFS</div>
              <div>Healthy (System, Active, Primary Partiti</div>
            </PartBox>
          </Partition>
          <Partition $w={563}>
            <PartBar />
            <PartBox $hatch $ind={6}>
              <b>(C:)</b>
              <div>299,90 GB NTFS</div>
              <div>Healthy (Boot, Page File, Crash Dump, Primary Partition)</div>
            </PartBox>
          </Partition>
        </DiskRow>
        {["(D:)", "(E:)"].map((d) => (
          <DiskRow key={d} $w={993}>
            <Partition $w={889}>
              <PartBar />
              <PartBox $ind={6}>
                <b>{d}</b>
                <div>2047,00 GB NTFS</div>
                <div>Healthy (Primary Partition)</div>
              </PartBox>
            </Partition>
          </DiskRow>
        ))}
        <OpticalRow>
          <OpticalLabel>
            <div>DVD (G:)</div>
            <div />
            <div>No Media</div>
          </OpticalLabel>
        </OpticalRow>
      </Graph>
      <Legend>
        <Swatch $c="#000" />
        <b>Unallocated</b>
        <Swatch $c={DISK_BLUE} />
        <b>Primary partition</b>
      </Legend>
    </Centre>
  );
}

function Computer({ sx, sy, dy, time, line, startDown, initiator, children }) {
  return (
    <Desktop $sx={sx} $sy={sy} $dy={dy}>
      <TopStrip />
      <Body>
        <Tree />
        <PaneGap $w={6} />
        <DiskManagement />
        <PaneGap $w={7} />
        <Actions>
          <ActionsHead>Actions</ActionsHead>
          <ActionsTitle>Disk Management</ActionsTitle>
          <ActionItem>More Actions</ActionItem>
        </Actions>
        <Scroll />
      </Body>
      <StatusBar>
        <StatusCell $w={1363} />
        <StatusCell $w={127} />
        <StatusCell $w={77} />
      </StatusBar>
      <Taskbar $line={line}>
        <StartButton $down={startDown}>
          <WinFlag />
          Start
        </StartButton>
        <TaskItem $ml={9} $kind="window"><ServerManager /></TaskItem>
        <TaskItem $ml={1}><PowerShell /></TaskItem>
        <TaskItem $ml={1}><Explorer /></TaskItem>
        <TaskItem $ml={1}><Chrome /></TaskItem>
        {initiator && <TaskItem $ml={1} $kind="active"><Globe size={32} /></TaskItem>}
        <Lang>TR</Lang>
        <Tray>
          <TrayIcons />
          <Clock>
            <span>{time}</span>
            <span>17.02.2021</span>
          </Clock>
          <Peek />
        </Tray>
      </Taskbar>
      {children}
    </Desktop>
  );
}

function StartSearch() {
  return (
    <StartMenu>
      <MenuResults>
        <MenuHeading $gap={8}>Programs (1)</MenuHeading>
        <MenuEntry $gap={8}>
          <Globe size={16} />
          iSCSI Initiator
        </MenuEntry>
        <MenuHeading $gap={8}>Control Panel (1)</MenuHeading>
        <MenuEntry $gap={0}>
          <svg width="17" height="17" viewBox="0 0 17 17">
            <path d="M6 5h9v11H6z" fill="#dce8f2" stroke="#6d8ba6" />
            <circle cx="6" cy="6" r="4" fill="#c3d6e6" stroke="#7c97b0" strokeDasharray="2 1" strokeWidth="2" />
            <path d="M8 11l2 2 4-5" stroke="#3c6f9e" fill="none" />
          </svg>
          Set up iSCSI initiator
        </MenuEntry>
        <MoreResults>
          <svg width="15" height="16" viewBox="0 0 15 16">
            <circle cx="9" cy="5.500" r="4.700" fill="#f2f6fa" stroke="#8d9aa8" />
            <path d="M5.500 9.500L1 15" stroke="#8d9aa8" strokeWidth="1.500" />
          </svg>
          See more results
        </MoreResults>
      </MenuResults>
      <SearchRow>
        <SearchBox>isc</SearchBox>
        <ClearButton><Cross c="#fff" /></ClearButton>
        <LogOff $w={54}>Log off</LogOff>
        <LogOff $w={16}>
          <svg width="6" height="8" viewBox="0 0 6 8"><path d="M1 0l4 4-4 4z" /></svg>
        </LogOff>
      </SearchRow>
    </StartMenu>
  );
}

function TitleBar({ children, off }) {
  return (
    <Caption $off={off}>
      <span>{children}</span>
      <CloseBox><Cross /></CloseBox>
    </Caption>
  );
}

function InitiatorDialog({ background, connected, address, targets }) {
  return (
    <Window $x={130} $y={56} $w={485} $h={685}>
      <TitleBar off={background}>iSCSI Initiator Properties</TitleBar>
      <Tabs>
        <Tab $w={49} $on>Targets</Tab>
        <Tab $w={58}>Discovery</Tab>
        <Tab $w={92}>Favorite Targets</Tab>
        <Tab $w={111}>Volumes and Devices</Tab>
        <Tab $w={50}>RADIUS</Tab>
        <Tab $w={78}>Configuration</Tab>
      </Tabs>
      <Page>
        <Group $h={95} $mb={3}>
          <legend>Quick Connect</legend>
          <Copy $h={50} $pt={6}>
            To discover and log on to a target using a basic connection, type the IP address or
            <br />
            DNS name of the target and then click Quick Connect.
          </Copy>
          <Line $h={24}>
            <FieldLabel>Target:</FieldLabel>
            <TextField $w={215}>{address && <span>{address}</span>}</TextField>
            <PushRight><Button $w={109} $off={connected}>Quick Connect...</Button></PushRight>
          </Line>
        </Group>
        <Group $h={404}>
          <legend>Discovered targets</legend>
          <Line $h={27} $justify="flex-end" $align="flex-start"><Button $w={109}>Refresh</Button></Line>
          <ListBox $h={178} $mr={4}>
            <ListHead>
              <ListCell $w={292} $line>Name</ListCell>
              <ListCell $w={120}>Status</ListCell>
            </ListHead>
            {targets && (
              <>
                <ListRow $dim />
                <ListRow>
                  <ListCell $w={292}>iqn.2004-04.com.qnap:ts-419pii:iscsi.qnapsql2.d09c8d</ListCell>
                  <ListCell $w={120}>Inactive</ListCell>
                </ListRow>
              </>
            )}
          </ListBox>
          <ActionSpacer />
          {TARGET_ACTIONS.map(([a, b, label, h]) => (
            <Line key={label} $h={h} $align="flex-start">
              <Copy $h={26} $pt={1}>{a}<br />{b}</Copy>
              <PushRight><Button $w={109} $off={!connected}>{label}</Button></PushRight>
            </Line>
          ))}
        </Group>
        <Link>More about basic iSCSI connections and targets</Link>
      </Page>
      <DialogFooter>
        <Button $w={76} $default={!background}>OK</Button>
        <Button $w={75}>Cancel</Button>
        <Button $w={75} $off><u>A</u>pply</Button>
      </DialogFooter>
    </Window>
  );
}

function QuickConnectDialog() {
  return (
    <Window $x={132} $y={79} $w={453} $h={502}>
      <TitleBar>Quick Connect</TitleBar>
      <QuickBody>
        <Copy $h={57}>
          Targets that are available for connection at the IP address or DNS name that you
          <br />
          provided are listed below.&nbsp; If multiple targets are available, you need to connect
          <br />
          to each target individually.
        </Copy>
        <Copy $h={47}>
          Connections made here will be added to the list of Favorite Targets and an attempt
          <br />
          to restore them will be made every time this computer restarts.
        </Copy>
        <QuickGroups>
          <Group $h={156} $mb={6}>
            <legend>Discovered targets</legend>
            <GroupInner>
              <ListBox $h={119} $mr={3}>
                <ListHead>
                  <ListCell $w={269} $line>Name</ListCell>
                  <ListCell $w={110}>Status</ListCell>
                </ListHead>
                <ListRow $sel>
                  <ListCell $w={269}>iqn.2004-04.com.qnap:ts-419pii:iscsi.qnapsql.d09c8d</ListCell>
                  <ListCell $w={110}>Inactive</ListCell>
                </ListRow>
                <ListRow>
                  <ListCell $w={269}>iqn.2004-04.com.qnap:ts-419pii:iscsi.qnapsql2.d09...</ListCell>
                  <ListCell $w={110}>Inactive</ListCell>
                </ListRow>
              </ListBox>
            </GroupInner>
          </Group>
          <Group $h={140}>
            <legend>Progress report</legend>
            <Report>
              There are multiple Targets discovered.Please select a single Target for Login
              <br />
              using Quick Connect.
            </Report>
          </Group>
        </QuickGroups>
        <QuickButtons>
          <Button $w={85}>Connect</Button>
          <Button $w={81}>Done</Button>
        </QuickButtons>
      </QuickBody>
    </Window>
  );
}

function ConnectDialog() {
  return (
    <Window $x={133} $y={79} $w={416} $h={209}>
      <TitleBar>Connect To Target</TitleBar>
      <ConnectBody>
        <Copy $h={18}>&nbsp;Target name:</Copy>
        <TextField $w={330} $ro>
          <mark>iqn.2004-04.com.qnap:ts-419pii:iscsi.qnapsql.d09c8d</mark>
        </TextField>
        <CheckLines>
          <Line $h={16} $gap={5}>
            <CheckBox>
              <svg width="8" height="8" viewBox="0 0 8 8"><path d="M1 3.500l2 2.500 4-5" fill="none" stroke="#000" strokeWidth="1.800" /></svg>
            </CheckBox>
            Add this connection to the list of Favorite Targets.
          </Line>
          <Indented>
            This will make the system automatically attempt to restore the
            <br />
            connection every time this computer restarts.
          </Indented>
          <Line $h={14} $gap={5}>
            <CheckBox />
            Enable multi-path
          </Line>
        </CheckLines>
        <ConnectButtons>
          <Button $w={75}>Advanced...</Button>
          <PushRight><Button $w={75} $default>OK</Button></PushRight>
          <Button $w={75}>Cancel</Button>
        </ConnectButtons>
      </ConnectBody>
    </Window>
  );
}

const HOOK =
  "M0,6 C35,-2 75,7 112,-2 C92,9 66,8 44,17 C95,36 131,85 127,141 C116,98 86,60 50,40 L56,62 C52,71 42,73 38,66 C30,45 12,27 0,6Z";

const HOOKS = [
  [75.5, 329.5],
  [1418.3, 143.5],
  [315, 930.5],
  [200, 1118],
  [1310.7, 911.5],
];

export default function App() {
  return (
    <Sheet>
      <GlobalStyle />
      <Shot>
        <Computer sx={0.65} sy={0.784} time="09:17" line startDown>
          <StartSearch />
        </Computer>
      </Shot>
      <Shot>
        <Computer sx={0.6498} sy={0.787} dy={-0.9} time="09:18" initiator>
          <InitiatorDialog address="192.168.1.28" />
        </Computer>
      </Shot>
      <Shot>
        <Computer sx={0.6495} sy={0.7118} dy={-0.6} time="09:18" initiator>
          <InitiatorDialog background />
          <QuickConnectDialog />
          <Tooltip>Start</Tooltip>
        </Computer>
      </Shot>
      <Shot $inset={4}>
        <Computer sx={0.6475} sy={0.7125} dy={-2.4} time="09:19" initiator>
          <InitiatorDialog background connected targets />
          <ConnectDialog />
        </Computer>
      </Shot>

      <Note $x={218.5} $y={132.3}>Başlat / ISCSI iniatör aç</Note>
      <Note $x={1389} $y={193}>
        {"Karşımıza gelen menüden\nTarget kısmına NAS cihazımızın\nip adresini yazıp Quick Connect diyelim."}
      </Note>
      <Note $x={414} $y={829}>
        {"Karşıma gelen ekrandan\nNas tarafında oluşan targetlar\ngörünüyor. birini seçip connect\ndiyorum."}
      </Note>
      <Note $x={1520} $y={829}>{"Karşıma gelen ekrana\nok diyorum"}</Note>
      <Note $x={983.5} $y={610} $size={75} $plain>1</Note>
      <Note $x={1977} $y={624} $size={74.5}>2</Note>
      <Note $x={973.5} $y={1293} $size={74.5}>3</Note>
      <Note $x={1976} $y={1293} $size={74.5}>4</Note>

      <ArrowLayer viewBox="0 0 2048 1392">
        {HOOKS.map(([x, y]) => (
          <path key={x} d={HOOK} transform={`translate(${x} ${y}) scale(.3333)`} fill="#e60505" />
        ))}
        <path
          transform="translate(1020 0) scale(.3333)"
          fill="#e60505"
          d="M435,438 C410,430 385,415 366,389 C373,412 385,425 396,436 C350,440 300,470 294,510 C320,480 350,465 392,455 L375,468 C372,482 385,487 395,478 C410,465 422,455 435,438Z"
        />
        <path
          transform="translate(0 350) scale(.3333)"
          fill="#e60505"
          d="M82,1008 C105,975 118,945 140,906 C133,935 128,955 120,972 C170,945 240,950 270,972 C225,962 170,968 140,985 C168,988 170,1000 155,1003 C135,1008 100,1014 82,1008Z"
        />
      </ArrowLayer>
    </Sheet>
  );
}
